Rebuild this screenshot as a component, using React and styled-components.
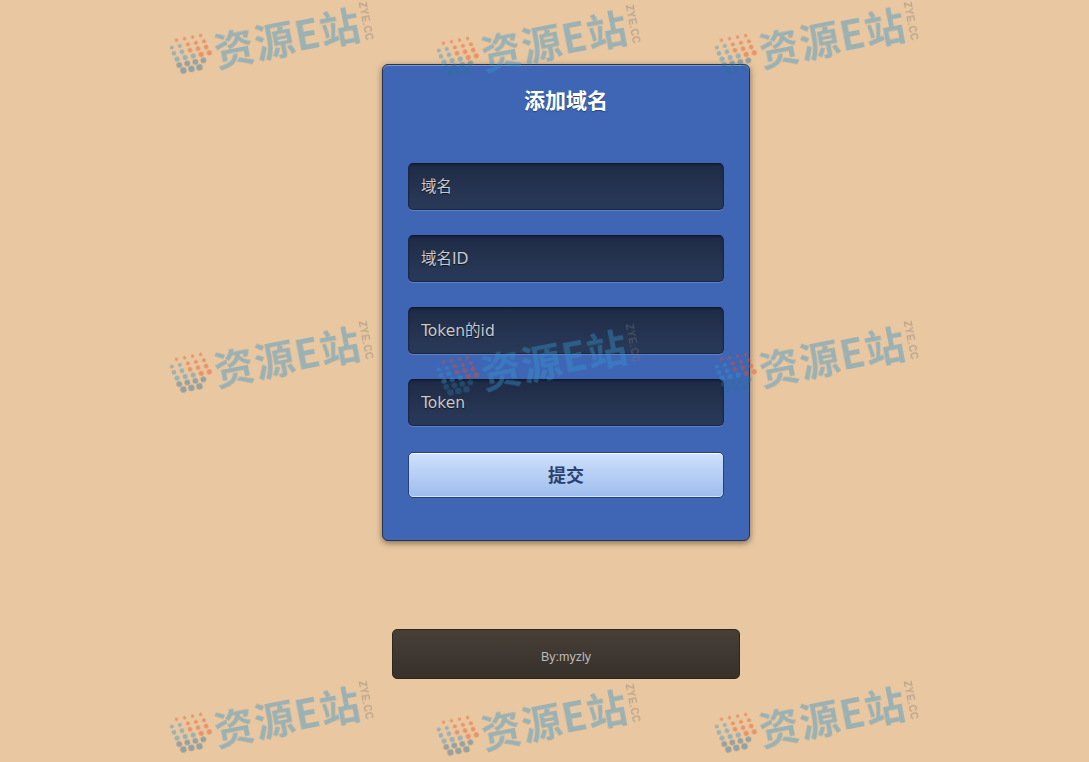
import styled, { createGlobalStyle } from "styled-components";

const GlobalStyle = createGlobalStyle`
  html, body {
    margin: 0;
    padding: 0;
    height: 100%;
    background: #e9c7a0;
  }
  * {
    box-sizing: border-box;
  }
`;

const Page = styled.div`
  position: relative;
  width: 1089px;
  height: 762px;
  overflow: hidden;
  padding: 64px 0 0 43px;
  display: flex;
  flex-direction: column;
  align-items: center;
  background: #e9c7a0;
  font-family: "DejaVu Sans", "Noto Sans CJK SC", sans-serif;
`;

const Panel = styled.form`
  width: 368px;
  height: 477px;
  padding: 24px 25px 0;
  display: flex;
  flex-direction: column;
  background: #3f66b5;
  border: 1px solid #27344f;
  border-radius: 6px;
  box-shadow: inset 0 1px 0 #7f9dd3, 0 2px 6px rgba(40, 30, 20, 0.55);
`;

const Title = styled.h1`
  margin: 0 0 53px;
  height: 21px;
  line-height: 21px;
  text-align: center;
  font-family: "Noto Sans CJK SC", sans-serif;
  font-size: 21px;
  font-weight: 700;
  color: #fff;
  text-shadow: 0 1px 1px rgba(20, 30, 60, 0.5);
`;

const Field = styled.input`
  display: block;
  width: 100%;
  height: 47px;
  margin-bottom: 25px;
  padding: 0 12px;
  font-family: "DejaVu Sans", "Noto Sans CJK SC", sans-serif;
  font-size: 15.5px;
  color: #c4c4c4;
  background: linear-gradient(#1f2b46, #293a59);
  border: 1px solid #1b2843;
  border-top-color: #0f1733;
  border-radius: 5px;
  outline: none;
  box-shadow: inset 0 1px 2px rgba(0, 0, 0, 0.35), 0 1px 0 rgba(255, 255, 255, 0.18);

  &::placeholder {
    color: #c8c8c8;
    opacity: 1;
    text-shadow: 0 1px 1px rgba(0, 0, 0, 0.6);
  }
`;

const Submit = styled.button`
  display: block;
  width: 100%;
  height: 46px;
  margin-top: 1px;
  padding: 0 0 2px;
  font-family: "Noto Sans CJK SC", sans-serif;
  font-size: 18px;
  font-weight: 700;
  color: #2a4272;
  background: linear-gradient(#cfe1fe, #9dbcec);
  border: 1px solid #26417a;
  border-radius: 5px;
  box-shadow: inset 0 1px 0 #fff, inset 0 -1px 0 #d3e3fb;
`;

const Footer = styled.footer`
  width: 348px;
  height: 50px;
  margin-top: 88px;
  padding-top: 20px;
  text-align: center;
  font-family: "Liberation Sans", Arial, sans-serif;
  font-size: 12.5px;
  line-height: 15px;
  color: #bbb;
  background: linear-gradient(#473e37, #37312b);
  border: 1px solid #2c2520;
  border-radius: 5px;
`;

const Mark = styled.div`
  position: absolute;
  left: ${(props) => props.x}px;
  top: ${(props) => props.y}px;
  width: 206px;
  height: 36px;
  display: flex;
  align-items: center;
  opacity: 0.42;
  transform: rotate(-11deg);
  pointer-events: none;
  filter: blur(0.4px);
`;

const MarkText = styled.span`
  display: inline-block;
  height: 36px;
  margin-left: -1px;
  font-family: "Noto Sans CJK SC", sans-serif;
  font-size: 40px;
  font-weight: 700;
  line-height: 36px;
  letter-spacing: 1px;
  white-space: nowrap;
  color: #3493cd;
`;

const MarkSite = styled.span`
  width: 10px;
  margin-left: 1px;
  display: flex;
  justify-content: center;
  font-family: "Liberation Sans", Arial, sans-serif;
  font-size: 10px;
  font-weight: 700;
  letter-spacing: 0.5px;
  white-space: nowrap;
  color: #777;
  transform: rotate(90deg);
`;

const O = "#e8501e";
const B = "#3493cd";
const G = "#2b6f9a";

// each row: left edge, dot radius, colours
const dotRows = [
  [8, 1.7, [O, O, O, O]],
  [2, 2, [B, B, O, O, O]],
  [3, 2.3, [B, B, O, O, O]],
  [5, 2.6, [B, B, B, O, O]],
  [6, 2.9, [G, G, G, G]],
  [9, 3.2, [G, G, G]],
];

const Dots = () => (
  <svg width="44" height="40" viewBox="0 1 44 40" style={{ flex: "none", marginLeft: "1px" }}>
    {dotRows.map(([left, r, colors], row) =>
      colors.map((color, i) => (
        <circle key={`${row}-${i}`} cx={left + i * 8.2} cy={4 + row * 6.2} r={r} fill={color} />
      ))
    )}
  </svg>
);

const Watermark = ({ x, y }) => (
  <Mark x={x} y={y}>
    <Dots />
    <MarkText>资源E站</MarkText>
    <MarkSite>ZYE.CC</MarkSite>
  </Mark>
);

const marks = [
  [169, 21], [436, 24], [714, 21],
  [169, 340], [436, 343], [714, 340],
  [169, 700], [436, 703], [714, 700],
];

export default function App() {
  return (
    <Page>
      <GlobalStyle />
      <Panel onSubmit={(e) => e.preventDefault()}>
        <Title>添加域名</Title>
        <Field placeholder="域名" />
        <Field placeholder="域名ID" />
        <Field placeholder="Token的id" />
        <Field placeholder="Token" />
        <Submit type="submit">提交</Submit>
      </Panel>
      <Footer>By:myzly</Footer>
      {marks.map(([x, y]) => (
        <Watermark key={`${x}-${y}`} x={x} y={y} />
      ))}
    </Page>
  );
}
